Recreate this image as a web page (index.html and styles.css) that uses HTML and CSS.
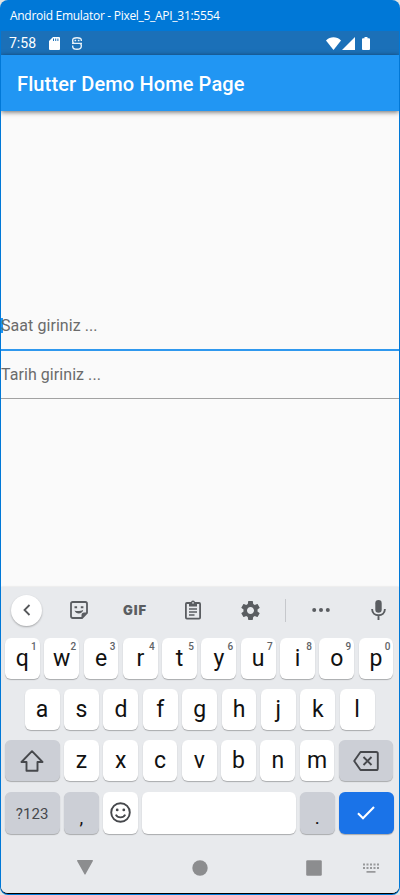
FILE: index.html
```html
<!DOCTYPE html>
<html lang="en">
<head>
<meta charset="utf-8">
<title>Flutter Demo Home Page</title>
<link rel="stylesheet" href="styles.css">
</head>
<body>
<div class="window">
  <div class="titlebar">Android Emulator - Pixel_5_API_31:5554</div>
  <div class="screen">
    <div class="status">
      <span class="clock">7:58</span>
      <svg class="sd" width="11" height="13" viewBox="0 0 11 13"><path fill="#fff" d="M4 0h6a1 1 0 0 1 1 1v11a1 1 0 0 1-1 1H1a1 1 0 0 1-1-1V4z"/><path stroke="#1b70b8" d="M4.500 1.500v2.500M6.700 1.500v2.500M8.900 1.500v2.500"/></svg>
      <svg class="debug" width="10" height="13" viewBox="0 0 10 13" fill="none" stroke="#e8f1f8" stroke-width="1.400"><path d="M9.300 4V3C9.300 1.500 7.300.8 5 .8S.7 1.500.7 3v1.200c0 1.400 1 2.200 2.300 2.200h4c1.400 0 2.300.7 2.300 2v.9c0 2-2 3-4.300 3S.7 11.300.7 9.500V8.600M0 6.400h10M2.500 3.500h1.700M5.800 3.500h1.700"/></svg>
      <span class="grow"></span>
      <svg width="15" height="13" viewBox="0 0 16 13" preserveAspectRatio="none"><path fill="#fff" d="M0 3.500C4.500-.8 11.500-.8 16 3.500L8 13z"/></svg>
      <svg class="cell" width="13" height="13" viewBox="0 0 13 13"><path fill="#fff" d="M13 0v13H0z"/></svg>
      <svg class="battery" width="8" height="13" viewBox="0 0 8 13"><path fill="#fff" d="M2.500 0h3v1.200H7a1 1 0 0 1 1 1V12a1 1 0 0 1-1 1H1a1 1 0 0 1-1-1V2.200a1 1 0 0 1 1-1h1.500z"/></svg>
    </div>
    <div class="appbar">Flutter Demo Home Page</div>
    <div class="content">
      <div class="field focused">Saat giriniz ...</div>
      <div class="field">Tarih giriniz ...</div>
    </div>
    <div class="keyboard">
      <div class="tools">
        <div class="tool t-back"><span class="round"><svg width="8" height="12" viewBox="0 0 8 12" fill="none" stroke="#55575a" stroke-width="1.800"><path d="M6.500 1L1.500 6l5 5"/></svg></span></div>
        <div class="tool t-sticker"><svg width="18" height="18" viewBox="0 0 18 18" fill="none" stroke="#5a5d61" stroke-width="1.800"><path d="M2.700 1h12.600c1 0 1.700.7 1.700 1.700V12l-5 5H2.700C1.700 17 1 16.300 1 15.300V2.700C1 1.700 1.700 1 2.700 1z"/><path d="M17 11.500h-3c-1.500 0-2.500 1-2.500 2.500v3z" fill="#5a5d61" stroke="none"/><path d="M4.500 6.200h2.600M10.800 6.200h2.600" stroke-width="1.900"/><path d="M4.500 9.600c2 .8 6 .8 8.700-.9-.6 4.600-7.200 5.200-8.700.9z" fill="#5a5d61" stroke="none"/></svg></div>
        <div class="tool t-gif"><span>GIF</span></div>
        <div class="tool t-clip"><svg width="16" height="20" viewBox="0 0 16 20" fill="none" stroke="#5a5d61" stroke-width="1.800"><rect x=".9" y="3" width="14.200" height="15.600" rx="1"/><path d="M4 2.500h2a2 2 0 0 1 4 0h2v4H4z" fill="#5a5d61" stroke="none"/><circle cx="8" cy="2.900" r=".8" fill="#e8eaed" stroke="none"/><path d="M4 9h8M4 12h8M4 15h5.500" stroke-width="1.600"/></svg></div>
        <div class="tool t-gear"><svg width="19" height="19" viewBox="2.300 2.300 19.400 19.400"><path fill="#5a5d61" d="M19.140 12.940c.04-.3.060-.61.060-.94 0-.32-.02-.64-.07-.94l2.030-1.580c.18-.14.230-.41.120-.61l-1.920-3.320c-.12-.22-.37-.29-.59-.22l-2.390.96c-.5-.38-1.030-.7-1.620-.94l-.36-2.540c-.04-.24-.24-.41-.48-.41h-3.840c-.24 0-.43.17-.47.41l-.36 2.540c-.59.24-1.130.57-1.620.94l-2.390-.96c-.22-.08-.47 0-.59.22L2.740 8.870c-.12.21-.08.47.12.61l2.030 1.580c-.05.3-.09.630-.09.940s.02.64.07.94l-2.030 1.580c-.18.14-.23.41-.12.61l1.920 3.320c.12.22.37.29.59.22l2.390-.96c.5.38 1.030.7 1.620.94l.36 2.540c.05.240.24.41.48.41h3.840c.24 0 .44-.17.47-.41l.36-2.540c.59-.24 1.130-.56 1.620-.94l2.390.96c.22.080.47 0 .59-.22l1.920-3.320c.12-.22.070-.47-.12-.61l-2.010-1.580zM12 15.600c-1.980 0-3.600-1.620-3.600-3.600s1.620-3.600 3.600-3.600 3.600 1.620 3.600 3.600-1.620 3.600-3.600 3.600z"/></svg></div>
        <div class="divider"></div>
        <div class="tool t-more"><svg width="18" height="4" viewBox="0 0 18 4" fill="#5a5d61"><circle cx="2.200" cy="2" r="2"/><circle cx="9" cy="2" r="2"/><circle cx="15.800" cy="2" r="2"/></svg></div>
        <div class="tool t-mic"><svg width="15" height="20" viewBox="0 0 15 20" fill="none" stroke="#5a5d61" stroke-width="1.900"><rect x="4.300" y="0" width="6.400" height="12.800" rx="3.200" fill="#5a5d61" stroke="none"/><path d="M1.100 9c0 8.300 12.800 8.300 12.800 0M7.500 15v5"/></svg></div>
      </div>
      <div class="row">
        <div class="key">q<sup>1</sup></div><div class="key">w<sup>2</sup></div><div class="key">e<sup>3</sup></div><div class="key">r<sup>4</sup></div><div class="key">t<sup>5</sup></div><div class="key">y<sup>6</sup></div><div class="key">u<sup>7</sup></div><div class="key">i<sup>8</sup></div><div class="key">o<sup>9</sup></div><div class="key">p<sup>0</sup></div>
      </div>
      <div class="row inset">
        <div class="key">a</div><div class="key">s</div><div class="key">d</div><div class="key">f</div><div class="key">g</div><div class="key">h</div><div class="key">j</div><div class="key">k</div><div class="key">l</div>
      </div>
      <div class="row">
        <div class="key wide dark"><svg width="24" height="22" viewBox="0 0 24 22" fill="none" stroke="#46484c" stroke-width="1.900" stroke-linejoin="round"><path d="M12 1.200L1.500 12h5v8.800h11V12h5z"/></svg></div>
        <div class="key">z</div><div class="key">x</div><div class="key">c</div><div class="key">v</div><div class="key">b</div><div class="key">n</div><div class="key">m</div>
        <div class="key wide dark"><svg width="26" height="20" viewBox="0 0 26 20" fill="none" stroke="#46484c" stroke-width="1.900" stroke-linejoin="round"><path d="M7.500 1h15.700c1 0 1.600.6 1.600 1.600v14.800c0 1-.6 1.600-1.600 1.600H7.500L1.200 10z"/><path d="M10.500 6l8 8M18.500 6l-8 8"/></svg></div>
      </div>
      <div class="row last">
        <div class="key wide dark symbols">?123</div>
        <div class="key dark punct">,</div>
        <div class="key"><svg width="21" height="21" viewBox="0 0 21 21" fill="none" stroke="#46484c" stroke-width="1.900"><circle cx="10.500" cy="10.500" r="9.300"/><path d="M5.800 12.600c2 3.700 7.400 3.700 9.400 0"/><g fill="#46484c" stroke="none"><circle cx="7.200" cy="7.900" r="1.400"/><circle cx="13.800" cy="7.900" r="1.400"/></g></svg></div>
        <div class="key space"></div>
        <div class="key dark punct">.</div>
        <div class="key wide enter"><svg width="18" height="14" viewBox="0 0 18 14" fill="none" stroke="#fff" stroke-width="2.100"><path d="M1 7.200l5 5L17 1"/></svg></div>
      </div>
      <div class="nav">
        <div class="n-back"><svg width="16" height="15" viewBox="0 0 16 15"><path fill="#8c8d8f" d="M.8 0h14.400c.7 0 1 .5.700 1L8.500 14.300c-.3.500-.7.500-1 0L.1 1C-.2.500.1 0 .8 0z"/></svg></div>
        <div class="n-home"><svg width="16" height="16" viewBox="0 0 16 16"><circle cx="8" cy="8" r="7.700" fill="#8c8d8f"/></svg></div>
        <div class="n-recent"><svg width="16" height="16" viewBox="0 0 16 16"><rect x=".2" y=".2" width="15.600" height="15.600" rx="1.300" fill="#8c8d8f"/></svg></div>
        <div class="n-kbd"><svg width="16" height="10" viewBox="0 0 16 10" stroke="#98999b" fill="none"><path stroke-width="2" stroke-dasharray="2 1.500" d="M0 1.500h16M0 5h16"/><path stroke-width="1.700" d="M3.500 8.800h9"/></svg></div>
      </div>
    </div>
  </div>
</div>
</body>
</html>
```
FILE: styles.css
```css
* { box-sizing: border-box; }
body { margin: 0; background: #e4e4e2; font-family: Roboto, sans-serif; }
svg { display: block; flex: none; }
.window {
  width: 400px; height: 895px; padding: 0 1px 1px;
  background: #0078d7; border-radius: 8px; overflow: hidden;
  display: flex; flex-direction: column;
}
.titlebar {
  height: 31px; flex: none; padding-left: 9px;
  color: #fff; font: 12px/32px "Open Sans", sans-serif; letter-spacing: -0.29px; white-space: nowrap;
}
.screen {
  flex: 1; display: flex; flex-direction: column; background: #fafafa;
  border-bottom: 1px solid #000; border-radius: 0 0 7px 7px; overflow: hidden;
}
.status {
  height: 24px; flex: none; display: flex; align-items: center;
  padding: 0 29px 0 8px; background: #1b70b8; color: #fff;
}
.clock { width: 40px; font-size: 14px; line-height: 24px; }
.debug { margin-left: 12px; }
.grow { flex: 1; }
.cell { margin-left: 1px; }
.battery { margin-left: 7px; }
.appbar {
  height: 56px; flex: none; padding-left: 16px; background: #2196f3; color: #fff;
  font-size: 20px; font-weight: 500; line-height: 58px; letter-spacing: .12px; white-space: nowrap;
  box-shadow: 0 1px 5px rgba(0, 0, 0, .6);
}
.content { flex: 1; padding-top: 191px; }
.field {
  height: 48px; border-bottom: 1px solid #a2a2a2; color: #6b6b6b;
  font-size: 16px; line-height: 47px; letter-spacing: .06px;
}
.focused {
  height: 49px; border-bottom: 2px solid #2f98ee;
  background: linear-gradient(#2196f3, #2196f3) 0 16px / 2px 15px no-repeat;
}
.keyboard {
  height: 306px; flex: none; background: #e8eaed;
  box-shadow: 0 0 2px rgba(0, 0, 0, .15);
}
.tools { height: 51px; display: flex; align-items: center; padding-bottom: 5px; }
.tool { display: flex; align-items: center; justify-content: center; }
.t-back { width: 51px; }
.t-sticker { width: 53px; }
.t-gif { width: 60px; color: #5a5d61; font: 900 13px/16px Inter, sans-serif; letter-spacing: 1px; }
.t-clip { width: 56px; }
.t-gear { width: 58px; }
.divider { width: 1px; height: 23px; margin: 0 5px 0 6px; background: #c6c8cc; }
.t-more { width: 60px; }
.t-mic { width: 42px; margin-left: 6px; }
.round {
  width: 31px; height: 31px; border-radius: 50%; background: #fff;
  box-shadow: 0 1px 2px rgba(0, 0, 0, .3); display: flex; align-items: center; justify-content: center;
}
.row { display: flex; gap: 4.5px; height: 41px; margin: 0 5.5px 10.2px 4px; }
.inset { margin-left: 23.7px; margin-right: 24.5px; }
.last { height: 42px; margin-bottom: 0; }
.key {
  position: relative; flex: 1 1 0; min-width: 0; border-radius: 6px; background: #fff;
  box-shadow: 0 1px 1px rgba(0, 0, 0, .27); color: #111;
  font-size: 23px; line-height: 38px; display: flex; align-items: center; justify-content: center;
}
.key sup { position: absolute; top: 3px; right: 3px; font-size: 10px; font-weight: 500; line-height: 11px; color: #606367; }
.wide { flex: 0 0 54.5px; }
.dark { background: #cccfd6; }
.symbols { padding-top: 2px; font-size: 15px; letter-spacing: .1px; color: #46484c; }
.punct { padding-top: 10px; font-size: 19px; }
.space { flex: 0 0 153.5px; }
.enter { background: #1a73e8; }
.nav { display: flex; align-items: center; height: 60px; margin-top: 4.4px; padding-left: 26px; }
.nav div { display: flex; justify-content: center; }
.n-back { width: 115px; }
.n-home { width: 115px; }
.n-recent { width: 56px; margin-left: 29px; }
.n-kbd { width: 57px; }
```
